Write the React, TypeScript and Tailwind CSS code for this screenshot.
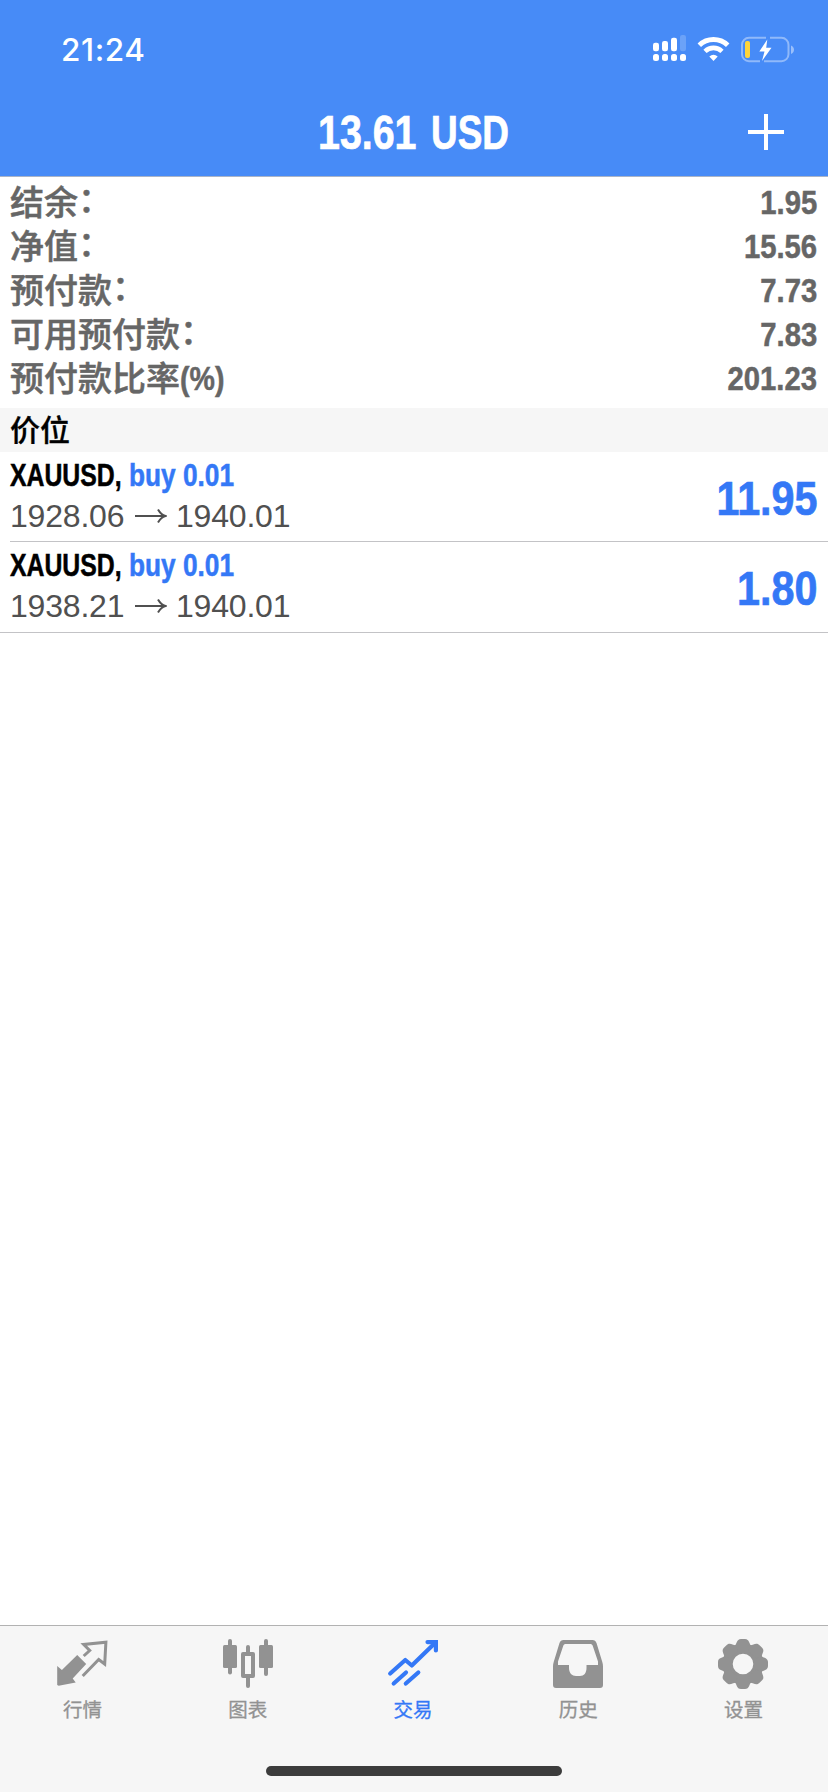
import type { ReactNode } from 'react';

interface Position {
    symbol: string;
    side: string;
    open: string;
    current: string;
    profit: string;
}

interface Tab {
    label: string;
    icon: ReactNode;
    active?: boolean;
}

const account = [
    { label: '结余', suffix: '：', value: '1.95' },
    { label: '净值', suffix: '：', value: '15.56' },
    { label: '预付款', suffix: '：', value: '7.73' },
    { label: '可用预付款', suffix: '：', value: '7.83' },
    { label: '预付款比率', suffix: '(%)', value: '201.23' },
];

const positions: Position[] = [
    { symbol: 'XAUUSD,', side: 'buy 0.01', open: '1928.06', current: '1940.01', profit: '11.95' },
    { symbol: 'XAUUSD,', side: 'buy 0.01', open: '1938.21', current: '1940.01', profit: '1.80' },
];

const teeth = [0, 45, 90, 135, 180, 225, 270, 315];

const tabs: Tab[] = [
    {
        label: '行情',
        icon: (
            <g transform="translate(-0.8 0)">
                <path d="M0 27 4.7 31 20 16 29 25 15.5 39.5 18.5 43.5 1.5 46.7 0 46Z" fill="currentColor" />
                <path d="M26.5 17 32.5 11.5 26.5 5.5 48.7 3.2 47.5 25 41.5 20.5 25.5 37" fill="none" stroke="currentColor" strokeWidth="3" />
            </g>
        ),
    },
    {
        label: '图表',
        icon: (
            <g fill="currentColor">
                <rect x="0" y="6" width="14" height="23" rx="1.5" />
                <rect x="5" y="0" width="4" height="35.5" rx="2" />
                <rect x="36" y="6" width="14" height="23" rx="1.5" />
                <rect x="41" y="0" width="4" height="37" rx="2" />
                <rect x="20" y="15" width="10" height="22" fill="none" stroke="currentColor" strokeWidth="4" strokeLinejoin="round" />
                <rect x="23" y="6" width="4" height="9" rx="2" />
                <rect x="23" y="37" width="4" height="12" rx="2" />
            </g>
        ),
    },
    {
        label: '交易',
        active: true,
        icon: (
            <g fill="none" stroke="currentColor" strokeWidth="4.2" strokeLinecap="round" strokeLinejoin="round">
                <path d="M2.2 34.5 17.3 21 23.8 26.5 47 4" />
                <path d="M39.5 3.1H47.9V11.5" strokeLinejoin="miter" />
                <path d="M18 33.5 5.7 44.5M30.3 33.5 17.8 44.5" />
            </g>
        ),
    },
    {
        label: '历史',
        icon: (
            <path
                d="M10.5 1h29c2 0 3.3 1 4 3l5.8 19c.5 1.5.7 3 .7 4.5V46c0 2-1 3-3 3H3c-2 0-3-1-3-3V27.5c0-1.5.2-3 .7-4.5L6.5 4c.7-2 2-3 4-3ZM13 5c-1.5 0-2.3.6-2.8 2L5 22.5V26h11v3c0 5 3 8 7 8h4c4 0 6.5-3 6.5-8v-3H45v-3.5L39.8 7c-.5-1.4-1.3-2-2.8-2Z"
                fill="currentColor"
                fillRule="evenodd"
            />
        ),
    },
    {
        label: '设置',
        icon: (
            <g fill="currentColor">
                <circle cx="25" cy="25" r="15.2" fill="none" stroke="currentColor" strokeWidth="9.8" />
                {teeth.map((angle) => (
                    <path key={angle} d="M16.5 6.8C19 5.5 18.3 0 23 0h4c4.7 0 4 5.5 6.5 6.8L30 12H20Z" transform={`rotate(${angle} 25 25)`} />
                ))}
            </g>
        ),
    },
];

function StatusBar() {
    return (
        <div className="flex h-[88px] items-start justify-between pl-[61px] pr-[33px]">
            <span className="mt-[27px] font-['Inter'] text-[31.5px] font-medium leading-[46px] tracking-[0.6px]">21:24</span>
            <div className="mt-[34px] flex">
                <svg className="h-[29px] w-[45px]" viewBox="652 34 45 29" fill="white">
                    <rect x="653" y="42.7" width="6" height="8.5" rx="2.2" />
                    <rect x="662" y="41" width="6" height="10.2" rx="2.2" />
                    <rect x="671" y="37.7" width="6" height="13.5" rx="2.2" />
                    <rect x="680" y="35" width="6" height="16.2" rx="2.2" opacity="0.2" />
                    <rect x="653" y="54" width="6" height="7" rx="2.5" />
                    <rect x="662" y="54" width="6" height="7" rx="2.5" />
                    <rect x="671" y="54" width="6" height="7" rx="2.5" />
                    <rect x="680" y="54" width="6" height="7" rx="2.5" />
                </svg>
                <svg className="h-[29px] w-[43px]" viewBox="697 34 43 29" fill="none" stroke="white">
                    <path d="M699.3 45.3a20.5 20.5 0 0 1 28.4 0" strokeWidth="5" />
                    <path d="M705 51.3a12.3 12.3 0 0 1 17 0" strokeWidth="4.6" />
                    <path d="M709.3 56.5a6.5 6.5 0 0 1 8.4 0l-4.2 4.5Z" fill="white" stroke="none" />
                </svg>
                <svg className="h-[29px] w-[55px]" viewBox="740 34 55 29">
                    <path d="M766 37.8H749a7 7 0 0 0-7 7v9.4a7 7 0 0 0 7 7H760M770 37.8h11.5a7 7 0 0 1 7 7v9.4a7 7 0 0 1-7 7H764" fill="none" stroke="white" strokeOpacity="0.4" strokeWidth="2" />
                    <path d="M791 45.5c4 1.5 4 7 0 8.5Z" fill="white" fillOpacity="0.45" />
                    <rect x="745" y="41" width="5" height="17" rx="2" fill="#ffd43a" />
                    <path d="M767.3 39.5 759.3 51.5H764.5L762 61 771.5 47.8H766.2Z" fill="white" />
                </svg>
            </div>
        </div>
    );
}

function PositionRow({ item, last }: { item: Position; last: boolean }) {
    return (
        <div className={last ? 'h-[91px] border-b border-[#c3c3c6] pl-[10px]' : 'h-[90px] pl-[10px]'}>
            <div className={last ? 'flex h-full justify-between pr-[11px]' : 'flex h-full justify-between border-b border-[#c3c3c6] pr-[11px]'}>
                <div className="flex flex-col pt-[2px]">
                    <div className="flex h-[42px] items-center text-[32px] font-bold leading-[42px] [-webkit-text-stroke:0.5px]">
                        <span className="w-[119px]">
                            <span className="inline-block origin-left scale-x-[0.775] text-black">{item.symbol}</span>
                        </span>
                        <span className="inline-block origin-left scale-x-[0.82] whitespace-nowrap text-[#3478f6]">{item.side}</span>
                    </div>
                    <div className="flex h-[40px] items-center text-[32px] leading-[40px] tracking-[-0.2px] text-[#505050]">
                        <span className="w-[125px]">{item.open}</span>
                        <svg className="mr-[9px] h-[20px] w-[32px]" viewBox="0 0 32 20" fill="none" stroke="currentColor" strokeWidth="2">
                            <path d="M0 10H30M23 3.5C25 7 27 9 30.5 10 27 11 25 13 23 16.5" />
                        </svg>
                        <span>{item.current}</span>
                    </div>
                </div>
                <span className="origin-right scale-x-[0.86] pt-[4px] text-[48px] font-bold leading-[86px] text-[#3478f6] [-webkit-text-stroke:0.7px]">{item.profit}</span>
            </div>
        </div>
    );
}

export default function App() {
    return (
        <div className="flex h-[1792px] w-[828px] flex-col bg-white font-['Liberation_Sans','Noto_Sans_CJK_SC',sans-serif]">
            {/* Header */}
            <header className="h-[177px] border-b border-[#a9b4c8] bg-[#478bf7] text-white">
                <StatusBar />
                <div className="grid h-[88px] grid-cols-[1fr_auto_1fr] items-center">
                    <span />
                    <h1 className="flex w-[192px] whitespace-nowrap text-[48px] font-bold leading-[90px] [-webkit-text-stroke:0.7px]">
                        <span className="w-[113px]">
                            <span className="inline-block origin-left scale-x-[0.82]">13.61</span>
                        </span>
                        <span className="w-[79px]">
                            <span className="inline-block origin-left scale-x-[0.77]">USD</span>
                        </span>
                    </h1>
                    <svg className="mb-[3px] mr-[44px] h-9 w-9 justify-self-end" viewBox="0 0 36 36" stroke="white" strokeWidth="4">
                        <path d="M18 0V36M0 18H36" />
                    </svg>
                </div>
            </header>

            {/* Account summary */}
            <section className="h-[231px] pl-[10px] pr-[11px] pt-[3px] text-[#666]">
                {account.map((row) => (
                    <div key={row.label} className="flex h-11 items-center justify-between font-bold [-webkit-text-stroke:0.5px]">
                        <span className="flex pt-[2px] text-[34px] font-medium leading-[44px]">
                            <span>{row.label}</span>
                            {row.suffix === '：' ? (
                                <span className="-mt-[3px]">{row.suffix}</span>
                            ) : (
                                <span className="-mt-[1px] origin-left scale-x-[0.84] font-bold">{row.suffix}</span>
                            )}
                        </span>
                        <span className="origin-right scale-x-[0.86] text-[34px] leading-[44px]">{row.value}</span>
                    </div>
                ))}
            </section>

            <h2 className="h-11 bg-[#f6f6f6] pl-[10px] pt-[1px] text-[30px] font-medium leading-[44px] text-black [-webkit-text-stroke:0.3px]">价位</h2>

            <section className="flex-1">
                {positions.map((item, index) => (
                    <PositionRow key={item.open} item={item} last={index === positions.length - 1} />
                ))}
            </section>

            {/* Tab bar */}
            <footer className="flex h-[167px] flex-col items-center border-t border-[#b2b2b2] bg-[#f6f6f6]">
                <nav className="grid w-[826px] grid-cols-5 self-start pt-[13px]">
                    {tabs.map((tab) => (
                        <div key={tab.label} className={tab.active ? 'flex flex-col items-center text-[#3478f6]' : 'flex flex-col items-center text-[#929292]'}>
                            <svg className="h-[50px] w-[50px] overflow-visible" viewBox="0 0 50 50">
                                {tab.icon}
                            </svg>
                            <span className="mt-[6px] text-[19.5px] leading-[30px] [-webkit-text-stroke:0.3px]">{tab.label}</span>
                        </div>
                    ))}
                </nav>
                <div className="mb-4 mt-auto h-[10px] w-[296px] rounded-full bg-[#3c3c3c]" />
            </footer>
        </div>
    );
}
